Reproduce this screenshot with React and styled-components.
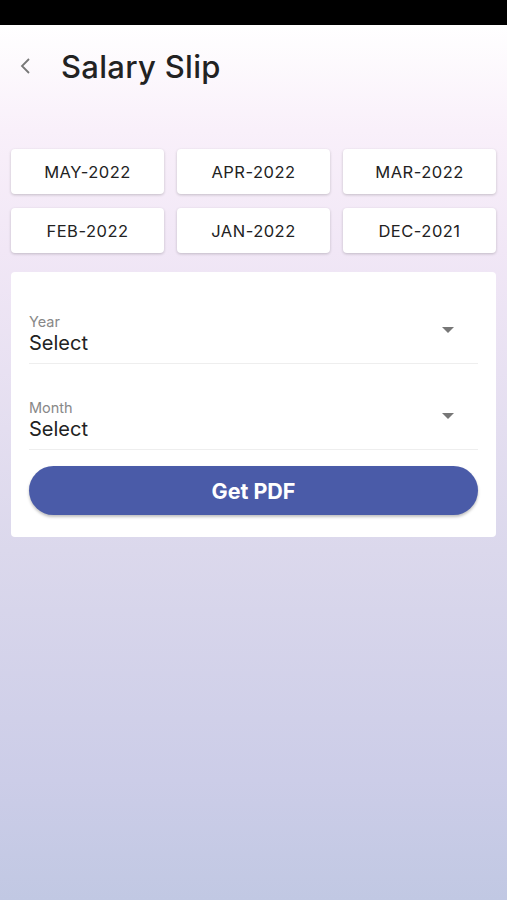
import styled, { createGlobalStyle } from "styled-components";

const GlobalStyle = createGlobalStyle`
    html, body {
        margin: 0;
        padding: 0;
    }
    body {
        font-family: 'Inter', 'Open Sans', sans-serif;
    }
    * {
        box-sizing: border-box;
    }
`

const meses = ["MAY-2022", "APR-2022", "MAR-2022", "FEB-2022", "JAN-2022", "DEC-2021"];

function Seletor({ rotulo }) {
    return (
        <Campo>
            <Textos>
                <Rotulo>{rotulo}</Rotulo>
                <Valor>Select</Valor>
            </Textos>
            <Seta />
        </Campo>
    );
}

export default function App() {
    return (
        <>
            <GlobalStyle />
            <Tela>
                <BarraStatus />
                <Cabecalho>
                    <Voltar>
                        <svg width="14" height="20" viewBox="0 0 14 20">
                            <path d="M10 3 L3 10 L10 17" fill="none" stroke="#777" strokeWidth="1.8" />
                        </svg>
                    </Voltar>
                    <Titulo>Salary Slip</Titulo>
                </Cabecalho>
                <Grade>
                    {meses.map(mes => <Mes key={mes}>{mes}</Mes>)}
                </Grade>
                <Cartao>
                    <Seletor rotulo="Year" />
                    <Seletor rotulo="Month" />
                    <BotaoPdf>Get PDF</BotaoPdf>
                </Cartao>
            </Tela>
        </>
    );
}

const Tela = styled.div`
    width: 100%;
    min-height: 900px;
    display: flex;
    flex-direction: column;
    background: linear-gradient(180deg, #ffffff 25px, #f9f0fa 130px, #f1e7f6 250px, #dbd8ec 550px, #cccde8 780px, #c1c8e3 900px);
`

const BarraStatus = styled.div`
    width: 100%;
    height: 25px;
    background-color: #000;
`

const Cabecalho = styled.div`
    height: 84px;
    display: flex;
    align-items: center;
    padding: 0 0 2px 19px;
`

const Voltar = styled.div`
    width: 14px;
    display: flex;
    align-items: center;
    margin-right: 28px;
`

const Titulo = styled.h1`
    margin: 0;
    font-family: 'Inter', sans-serif;
    font-weight: 500;
    font-size: 31px;
    color: #222;
    letter-spacing: 0.01em;
`

const Grade = styled.div`
    display: grid;
    grid-template-columns: repeat(3, 1fr);
    column-gap: 13px;
    row-gap: 14px;
    padding: 40px 11px 0 11px;
`

const Mes = styled.div`
    height: 45px;
    display: flex;
    justify-content: center;
    align-items: center;
    background-color: #fff;
    border-radius: 4px;
    box-shadow: 0 1px 3px rgba(0, 0, 0, 0.2);
    font-size: 16.5px;
    color: #222;
    letter-spacing: 0.03em;
`

const Cartao = styled.div`
    margin: 19px 11px 0 11px;
    height: 265px;
    background-color: #fff;
    border-radius: 4px;
    padding: 38px 18px 0 18px;
    display: flex;
    flex-direction: column;
`

const Campo = styled.div`
    height: 54px;
    margin-bottom: 32px;
    display: flex;
    justify-content: space-between;
    align-items: center;
    border-bottom: 1px solid #eee;
    padding-bottom: 6px;
`

const Textos = styled.div`
    display: flex;
    flex-direction: column;
    gap: 0;
`

const Rotulo = styled.span`
    font-size: 14.5px;
    color: #888;
    line-height: 18px;
`

const Valor = styled.span`
    font-size: 20px;
    color: #222;
    line-height: 24px;
`

const Seta = styled.div`
    width: 0;
    height: 0;
    margin-right: 24px;
    margin-bottom: 8px;
    border-left: 6px solid transparent;
    border-right: 6px solid transparent;
    border-top: 6px solid #777;
`

const BotaoPdf = styled.div`
    margin-top: -16px;
    height: 49px;
    border-radius: 25px;
    background-color: #4a5ba8;
    color: #fff;
    font-weight: 700;
    font-size: 21.5px;
    display: flex;
    justify-content: center;
    align-items: center;
    box-shadow: 0 2px 3px rgba(0, 0, 0, 0.25);
`
